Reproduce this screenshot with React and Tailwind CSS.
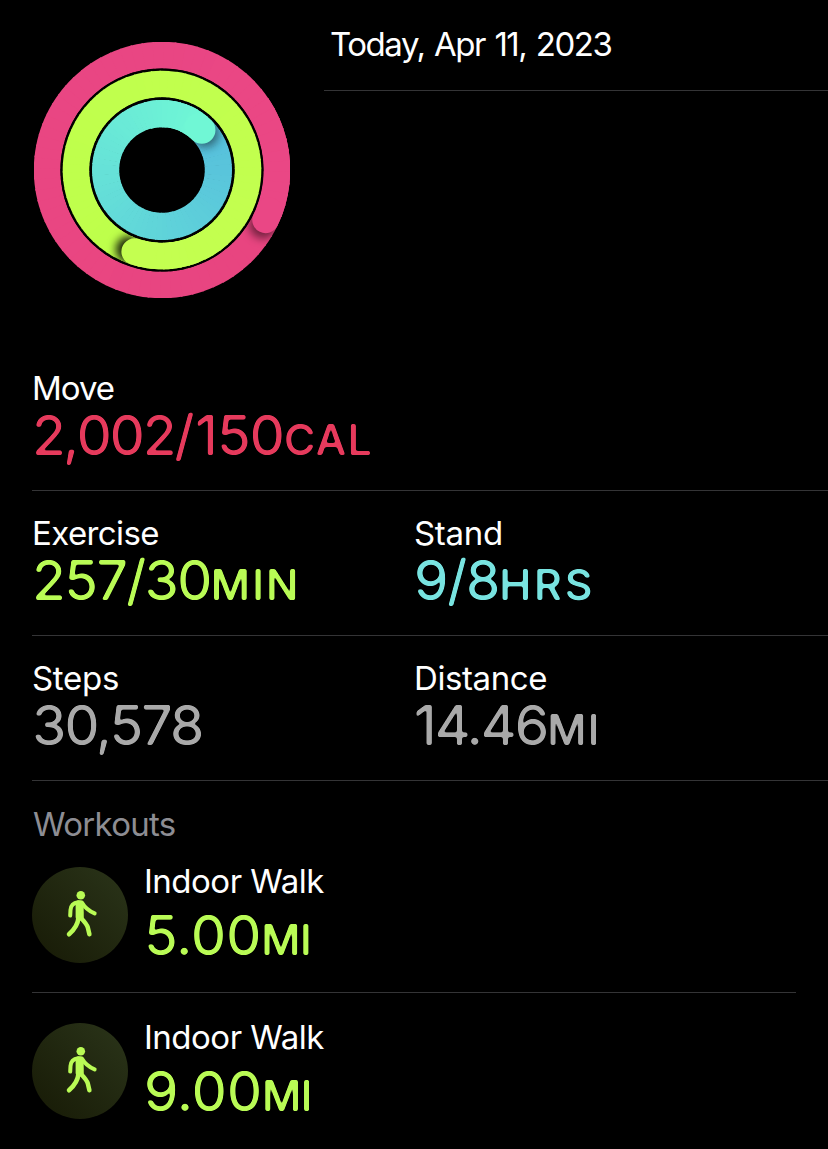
const CX = 128;
const CY = 128;

function polar(r, deg) {
  const a = ((deg - 90) * Math.PI) / 180;
  return [CX + r * Math.cos(a), CY + r * Math.sin(a)];
}

function arc(r, from, to) {
  const [x1, y1] = polar(r, from);
  const [x2, y2] = polar(r, to);
  return `M${x1} ${y1}A${r} ${r} 0 ${to - from > 180 ? 1 : 0} 1 ${x2} ${y2}`;
}

function mix(a, b, t) {
  return `rgb(${a.map((v, i) => Math.round(v + (b[i] - v) * t)).join(',')})`;
}

const SEGMENTS = 72;

function Ring({ id, r, width, end, start, finish, shadow, lead }) {
  const [sx, sy] = polar(r, end + lead);
  const step = 360 / SEGMENTS;
  return (
    <g fill="none">
      <mask id={id} maskUnits="userSpaceOnUse" x="0" y="0" width="256" height="256">
        <circle cx={CX} cy={CY} r={r} stroke="white" strokeWidth={width} fill="none" />
      </mask>
      {Array.from({ length: SEGMENTS }, (_, i) => (
        <path
          key={i}
          d={arc(r, end + i * step, end + (i + 1) * step + 0.8)}
          stroke={mix(start, finish, i / SEGMENTS)}
          strokeWidth={width}
        />
      ))}
      <g mask={`url(#${id})`}>
        <circle cx={sx} cy={sy} r={width / 2} fill="black" fillOpacity={shadow} filter="url(#soft)" />
      </g>
      {Array.from({ length: 12 }, (_, i) => (
        <path
          key={i}
          d={arc(r, end - 60 + i * 5, end - 60 + (i + 1) * 5 + (i < 11 ? 0.8 : 0))}
          stroke={mix(start, finish, (300 + i * 5) / 360)}
          strokeWidth={width}
          strokeLinecap={i === 11 ? 'round' : 'butt'}
        />
      ))}
    </g>
  );
}

function ActivityRings() {
  return (
    <svg className="block h-[256px] w-[256px]" viewBox="0 0 256 256">
      <defs>
        <filter id="soft" x="-60%" y="-60%" width="220%" height="220%">
          <feGaussianBlur stdDeviation="4" />
        </filter>
      </defs>
      <Ring id="move" r={114.9} width={26.6} end={115.7} start={[232, 69, 128]} finish={[234, 71, 133]} shadow={0.5} lead={3} />
      <circle cx={CX} cy={CY} r="101.6" fill="black" />
      <Ring id="exercise" r={86} width={26.6} end={198.5} start={[190, 255, 75]} finish={[196, 255, 80]} shadow={0.85} lead={4} />
      <circle cx={CX} cy={CY} r="72.4" fill="black" />
      <Ring id="stand" r={56.4} width={27.2} end={45} start={[86, 190, 220]} finish={[112, 248, 213]} shadow={0.45} lead={5} />
    </svg>
  );
}

function Label({ children, className = '' }) {
  return <div className={`text-[33px] leading-[37px] whitespace-nowrap ${className}`}>{children}</div>;
}

function Value({ value, unit, color, spacing = 'tracking-[-1.6px]', unitSpacing = 'tracking-[1.3px]' }) {
  return (
    <div className={`text-[55.5px] leading-[56px] font-normal whitespace-nowrap [filter:url(#rounded)] ${color}`}>
      <span className={spacing}>{value}</span>
      {unit && <span className={`text-[43px] leading-none font-medium ${unitSpacing}`}>{unit}</span>}
    </div>
  );
}

function Walker() {
  return (
    <svg className="h-24 w-24" viewBox="0 0 96 96" fill="none" stroke="#b9fb55" strokeLinecap="round" strokeLinejoin="round">
      <circle cx="48.8" cy="28.2" r="4.3" fill="#b9fb55" stroke="none" />
      <path d="M43.6 35.6Q44.4 33.2 47 33.2H48.8Q51 33.2 51.6 35.4L51.8 50Q51.6 53.6 47.8 53.6Q43.8 53.6 43.6 50Z" fill="#b9fb55" stroke="none" />
      <path d="M46.2 35.2C41.4 35.8 38.8 38.6 38.5 43L38.2 48.6" strokeWidth="4" />
      <path d="M50 35.8C52.4 40 55.8 43.6 62.6 46.4" strokeWidth="4.1" />
      <path d="M46.4 51C46 57 43.4 61.6 37 67.3" strokeWidth="4.5" />
      <path d="M49 51C52.2 54.4 55 57.6 55.8 60.4L57.4 67.2" strokeWidth="4.5" />
    </svg>
  );
}

function Workout({ value }) {
  return (
    <div className="flex items-start gap-4">
      <div className="h-24 w-24 rounded-full bg-linear-to-tr from-[#171a06] to-[#2b351a]">
        <Walker />
      </div>
      <div className="-mt-1 flex h-[100px] flex-col gap-[7px]">
        <Label className="tracking-[-0.5px]">Indoor Walk</Label>
        <Value value={value} unit="MI" color="text-[#b9fb55]" spacing="tracking-[0.1px]" unitSpacing="tracking-[-0.5px]" />
      </div>
    </div>
  );
}

function Section({ children }) {
  return (
    <section className="ml-8 grid h-[145px] grid-cols-[382px_1fr] border-b border-[#343436] pt-6">{children}</section>
  );
}

export default function App() {
  return (
    <main className="h-[1149px] w-[828px] overflow-hidden bg-black font-['Inter','Liberation_Sans',sans-serif] text-white">
      <svg className="hidden">
        <filter id="rounded" colorInterpolationFilters="sRGB" x="-2%" y="-5%" width="104%" height="110%">
          <feGaussianBlur stdDeviation="1.3" />
          <feComponentTransfer>
            <feFuncA type="linear" slope="3.6" intercept="-1.2" />
          </feComponentTransfer>
        </filter>
      </svg>
      <header className="flex h-[346px] items-start">
        <div className="w-[324px] pt-[42px] pl-[34px]">
          <ActivityRings />
        </div>
        <div className="h-[91px] flex-1 border-b border-[#343436] pt-[26px] pl-1.5">
          <Label className="tracking-[-1.45px] [word-spacing:1.5px]">Today, Apr 11, 2023</Label>
        </div>
      </header>
      <Section>
        <div>
          <Label className="tracking-[-1px]">Move</Label>
          <Value
            value={
              <>
                <span className="tracking-[-2.5px]">2,</span>
                <span className="tracking-[-2.1px]">002</span>
                <span className="tracking-[0.8px]">/</span>
                <span className="tracking-[-0.9px]">150</span>
              </>
            }
            unit="CAL"
            color="text-[#e63a5c]"
          />
        </div>
      </Section>
      <Section>
        <div>
          <Label className="tracking-[-0.6px]">Exercise</Label>
          <Value value="257/30" unit="MIN" color="text-[#b9fb55]" unitSpacing="tracking-[2.2px]" />
        </div>
        <div>
          <Label className="tracking-[-0.3px]">Stand</Label>
          <Value value="9/8" unit="HRS" color="text-[#78e3e0]" spacing="tracking-[-1.2px]" unitSpacing="tracking-[2.9px]" />
        </div>
      </Section>
      <Section>
        <div>
          <Label className="tracking-[-0.3px]">Steps</Label>
          <Value value="30,578" color="text-[#a9a9a9]" spacing="tracking-[-1.9px]" />
        </div>
        <div>
          <Label className="tracking-[-0.4px]">Distance</Label>
          <Value value="14.46" unit="MI" color="text-[#a9a9a9]" spacing="tracking-[-1.9px]" />
        </div>
      </Section>
      <section className="pt-[25px] pr-8 pl-8">
        <Label className="pl-px tracking-[-0.7px] text-[#8d8d93]">Workouts</Label>
        <div className="mt-6 border-b border-[#343436] pb-[29px]">
          <Workout value="5.00" />
        </div>
        <div className="pt-[30px]">
          <Workout value="9.00" />
        </div>
      </section>
    </main>
  );
}
